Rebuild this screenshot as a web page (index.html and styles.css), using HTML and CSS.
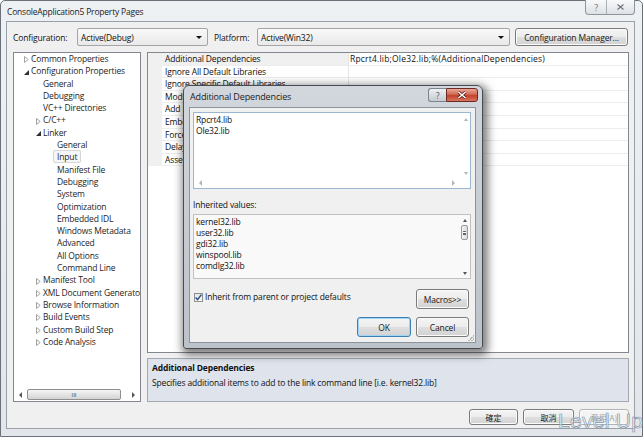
FILE: index.html
```html
<!DOCTYPE html>
<html lang="en">
<head>
    <meta charset="UTF-8">
    <meta name="viewport" content="width=device-width, initial-scale=1.0">
    <title>ConsoleApplication5 Property Pages</title>
    <link rel="stylesheet" href="styles.css">
</head>
<body>

<div class="window">
    <div class="titlebar">
        <span class="title">ConsoleApplication5 Property Pages</span>
        <div class="caption">
            <span class="cap-help">?</span>
            <span class="cap-close">
                <svg width="7" height="6" viewBox="0 0 7 6"><path d="M0.5 0.5 L6.5 5.5 M6.5 0.5 L0.5 5.5" stroke="#6d7279" stroke-width="1.1" fill="none"/></svg>
            </span>
        </div>
    </div>

    <div class="client">
        <div class="config-row">
            <span class="lbl lbl-config">Configuration:</span>
            <div class="combo combo-config">Active(Debug)<span class="arrow"></span></div>
            <span class="lbl lbl-platform">Platform:</span>
            <div class="combo combo-platform">Active(Win32)<span class="arrow"></span></div>
            <div class="btn btn-manager">Configuration Manager...</div>
        </div>

        <div class="main">
            <!-- 左側のツリー -->
            <div class="tree">
                <ul class="tree-list">
                    <li class="lvl0"><span class="exp"><svg width="5" height="7" viewBox="0 0 5 7"><path d="M0.5 0.5 L4.2 3.5 L0.5 6.5 Z" fill="none" stroke="#a2a2a2"/></svg></span>Common Properties</li>
                    <li class="lvl0"><span class="exp"><svg width="5" height="5" viewBox="0 0 5 5"><path d="M5 0 L5 5 L0 5 Z" fill="#2f2f2f"/></svg></span>Configuration Properties</li>
                    <li class="lvl1"><span class="exp"></span>General</li>
                    <li class="lvl1"><span class="exp"></span>Debugging</li>
                    <li class="lvl1"><span class="exp"></span>VC++ Directories</li>
                    <li class="lvl1"><span class="exp"><svg width="5" height="7" viewBox="0 0 5 7"><path d="M0.5 0.5 L4.2 3.5 L0.5 6.5 Z" fill="none" stroke="#a2a2a2"/></svg></span>C/C++</li>
                    <li class="lvl1"><span class="exp"><svg width="5" height="5" viewBox="0 0 5 5"><path d="M5 0 L5 5 L0 5 Z" fill="#2f2f2f"/></svg></span>Linker</li>
                    <li class="lvl2"><span class="exp"></span>General</li>
                    <li class="lvl2"><span class="exp"></span><span class="sel">Input</span></li>
                    <li class="lvl2"><span class="exp"></span>Manifest File</li>
                    <li class="lvl2"><span class="exp"></span>Debugging</li>
                    <li class="lvl2"><span class="exp"></span>System</li>
                    <li class="lvl2"><span class="exp"></span>Optimization</li>
                    <li class="lvl2"><span class="exp"></span>Embedded IDL</li>
                    <li class="lvl2"><span class="exp"></span>Windows Metadata</li>
                    <li class="lvl2"><span class="exp"></span>Advanced</li>
                    <li class="lvl2"><span class="exp"></span>All Options</li>
                    <li class="lvl2"><span class="exp"></span>Command Line</li>
                    <li class="lvl1"><span class="exp"><svg width="5" height="7" viewBox="0 0 5 7"><path d="M0.5 0.5 L4.2 3.5 L0.5 6.5 Z" fill="none" stroke="#a2a2a2"/></svg></span>Manifest Tool</li>
                    <li class="lvl1"><span class="exp"><svg width="5" height="7" viewBox="0 0 5 7"><path d="M0.5 0.5 L4.2 3.5 L0.5 6.5 Z" fill="none" stroke="#a2a2a2"/></svg></span>XML Document Generator</li>
                    <li class="lvl1"><span class="exp"><svg width="5" height="7" viewBox="0 0 5 7"><path d="M0.5 0.5 L4.2 3.5 L0.5 6.5 Z" fill="none" stroke="#a2a2a2"/></svg></span>Browse Information</li>
                    <li class="lvl1"><span class="exp"><svg width="5" height="7" viewBox="0 0 5 7"><path d="M0.5 0.5 L4.2 3.5 L0.5 6.5 Z" fill="none" stroke="#a2a2a2"/></svg></span>Build Events</li>
                    <li class="lvl1"><span class="exp"><svg width="5" height="7" viewBox="0 0 5 7"><path d="M0.5 0.5 L4.2 3.5 L0.5 6.5 Z" fill="none" stroke="#a2a2a2"/></svg></span>Custom Build Step</li>
                    <li class="lvl1"><span class="exp"><svg width="5" height="7" viewBox="0 0 5 7"><path d="M0.5 0.5 L4.2 3.5 L0.5 6.5 Z" fill="none" stroke="#a2a2a2"/></svg></span>Code Analysis</li>
                </ul>
                <div class="hscroll">
                    <span class="sb-btn"><span class="tri-left"></span></span>
                    <span class="sb-thumb"><span class="grip">III</span></span>
                    <span class="sb-track"></span>
                    <span class="sb-btn"><span class="tri-right"></span></span>
                </div>
            </div>

            <!-- 右側のプロパティ -->
            <div class="right">
                <div class="grid">
                    <div class="row selected"><span class="gut"></span><span class="name">Additional Dependencies</span><span class="value">Rpcrt4.lib;Ole32.lib;%(AdditionalDependencies)</span></div>
                    <div class="row"><span class="gut"></span><span class="name">Ignore All Default Libraries</span><span class="value"></span></div>
                    <div class="row"><span class="gut"></span><span class="name">Ignore Specific Default Libraries</span><span class="value"></span></div>
                    <div class="row"><span class="gut"></span><span class="name">Module Definition File</span><span class="value"></span></div>
                    <div class="row"><span class="gut"></span><span class="name">Add Module to Assembly</span><span class="value"></span></div>
                    <div class="row"><span class="gut"></span><span class="name">Embed Managed Resource File</span><span class="value"></span></div>
                    <div class="row"><span class="gut"></span><span class="name">Force Symbol References</span><span class="value"></span></div>
                    <div class="row"><span class="gut"></span><span class="name">Delay Loaded Dlls</span><span class="value"></span></div>
                    <div class="row"><span class="gut"></span><span class="name">Assembly Link Resource</span><span class="value"></span></div>
                </div>
                <div class="desc">
                    <div class="desc-title">Additional Dependencies</div>
                    <div class="desc-text">Specifies additional items to add to the link command line [i.e. kernel32.lib]</div>
                </div>
            </div>
        </div>

        <div class="buttons">
            <div class="btn btn-ok">確定</div>
            <div class="btn btn-cancel">取消</div>
            <div class="btn btn-apply disabled">套用(A)</div>
        </div>
    </div>
</div>

<!-- Additional Dependencies ダイアログ -->
<div class="dialog">
    <div class="dlg-titlebar">
        <span class="dlg-title">Additional Dependencies</span>
        <div class="dlg-caption">
            <span class="dlg-help">?</span>
            <span class="dlg-close">
                <svg width="10" height="8" viewBox="0 0 10 8"><path d="M1.5 1 L8.5 7 M8.5 1 L1.5 7" stroke="#5a1a12" stroke-width="3" fill="none"/><path d="M1.5 1 L8.5 7 M8.5 1 L1.5 7" stroke="#fff" stroke-width="1.6" fill="none"/></svg>
            </span>
        </div>
    </div>
    <div class="dlg-client">
        <div class="editbox">
            <div class="edit-body">
                <div class="edit-lines">
                    <div>Rpcrt4.lib</div>
                    <div>Ole32.lib</div>
                </div>
                <div class="vscroll">
                    <span class="tri-up light"></span>
                    <span class="tri-down light"></span>
                </div>
            </div>
            <div class="edit-hscroll">
                <span class="tri-left light"></span>
                <span class="tri-right light"></span>
                <span class="corner"></span>
            </div>
        </div>

        <div class="inh-label">Inherited values:</div>
        <div class="listbox">
            <div class="list-lines">
                <div>kernel32.lib</div>
                <div>user32.lib</div>
                <div>gdi32.lib</div>
                <div>winspool.lib</div>
                <div>comdlg32.lib</div>
            </div>
            <div class="vscroll list-scroll">
                <span class="tri-up"></span>
                <span class="v-thumb"><span class="v-grip"></span></span>
                <span class="tri-down"></span>
            </div>
        </div>

        <div class="check-row">
            <label class="check">
                <span class="box"><svg width="9" height="9" viewBox="0 0 9 9"><path d="M1.6 4.4 L3.6 6.6 L7.4 1.6" stroke="#2b4f8e" stroke-width="1.5" fill="none"/></svg></span>
                Inherit from parent or project defaults
            </label>
            <div class="btn btn-macros">Macros&gt;&gt;</div>
        </div>

        <div class="dlg-buttons">
            <div class="btn btn-dlg-ok">OK</div>
            <div class="btn btn-dlg-cancel">Cancel</div>
        </div>
        <span class="grip-corner"></span>
    </div>
</div>

<div class="watermark">Level Up</div>

</body>
</html>
```

FILE: styles.css
```css
body {
    margin: 0;
    width: 644px;
    height: 439px;
    overflow: hidden;
    position: relative;
    background: #fff;
    font-family: "Open Sans", "Noto Sans", sans-serif;
    font-size: 8.5px;
    letter-spacing: -0.15px;
    color: #111;
}

/* メインウィンドウ */
.window {
    width: 643px;
    height: 437px;
    box-sizing: border-box;
    border: 1px solid #6b7178;
    border-radius: 5px 5px 0 0;
    background: linear-gradient(#eef1f4, #e2e6ea);
    padding: 0 7px 7px 5px;
    display: flex;
    flex-direction: column;
}
.titlebar {
    height: 20px;
    display: flex;
    align-items: center;
}
.title {
    padding-left: 1px;
    font-size: 8.5px;
    letter-spacing: -0.2px;
    color: #1b1b1b;
}
.caption {
    margin-left: auto;
    align-self: flex-start;
    margin-top: -1px;
    height: 14px;
    display: flex;
    border: 1px solid #8e959d;
    border-top: none;
    border-radius: 0 0 4px 4px;
    background: linear-gradient(#f8f9fa, #dde1e5);
}
.caption span {
    display: flex;
    align-items: center;
    justify-content: center;
}
.cap-help {
    width: 20px;
    border-right: 1px solid #a9afb6;
    color: #6d7279;
    font-size: 9px;
}
.cap-close {
    width: 27px;
}

.client {
    height: 408px;
    box-sizing: border-box;
    border: 1px solid #98a0a9;
    background: #f0f0f0;
    padding: 6px 5px 0 6px;
    display: flex;
    flex-direction: column;
}

/* 構成の行 */
.config-row {
    display: flex;
    align-items: center;
    height: 18px;
}
.lbl-config {
    width: 64px;
}
.lbl-platform {
    width: 43px;
    margin-left: 6px;
}
.combo {
    height: 18px;
    box-sizing: border-box;
    border: 1px solid #a5a5a5;
    border-radius: 2px;
    background: linear-gradient(#f9f9f9, #e9e9e9);
    display: flex;
    align-items: center;
    padding-left: 3px;
}
.combo-config {
    width: 131px;
}
.combo-platform {
    width: 253px;
}
.combo .arrow {
    margin-left: auto;
    margin-right: 5px;
    border-top: 3px solid #111;
    border-left: 3px solid transparent;
    border-right: 3px solid transparent;
}
.btn {
    box-sizing: border-box;
    border: 1px solid #7a7a7a;
    border-radius: 3px;
    background: linear-gradient(#f4f4f4 0%, #ececec 50%, #dfdfdf 51%, #d2d2d2 100%);
    box-shadow: inset 0 0 0 1px #fbfbfb;
    display: flex;
    align-items: center;
    justify-content: center;
    color: #1a1a1a;
}
.btn-manager {
    width: 113px;
    height: 18px;
    margin-left: 5px;
}

.main {
    display: flex;
    gap: 6px;
    height: 350px;
    margin-top: 6px;
}

/* ツリー */
.tree {
    width: 128px;
    box-sizing: border-box;
    border: 1px solid #828790;
    background: #fff;
    display: flex;
    flex-direction: column;
    overflow: hidden;
}
.tree-list {
    list-style: none;
    margin: 0;
    padding: 0;
    flex: 1;
}
.tree-list li {
    height: 12.3px;
    line-height: 12.3px;
    white-space: nowrap;
    color: #1e1e1e;
}
.tree-list .lvl0 { padding-left: 10px; }
.tree-list .lvl1 { padding-left: 22px; }
.tree-list .lvl2 { padding-left: 36px; }
.exp {
    display: inline-block;
    width: 7px;
    vertical-align: middle;
    line-height: 0;
}
.sel {
    margin-left: -4px;
    padding: 0 3px;
    border: 1px solid #d6d6d6;
    border-radius: 2px;
    background: #f6f6f6;
}
.hscroll {
    height: 11px;
    display: flex;
    align-items: stretch;
    margin: 0 0 1px;
}
.sb-btn {
    width: 13px;
    display: flex;
    align-items: center;
    justify-content: center;
}
.sb-thumb {
    width: 94px;
    box-sizing: border-box;
    border: 1px solid #8f8f8f;
    border-radius: 2px;
    background: linear-gradient(#f6f6f6, #d4d4d4);
    display: flex;
    align-items: center;
    justify-content: center;
}
.grip {
    font-size: 6px;
    letter-spacing: 0;
    color: #555;
    font-family: "Liberation Sans", sans-serif;
}
.sb-track {
    flex: 1;
}
.tri-left, .tri-right, .tri-up, .tri-down {
    display: inline-block;
    width: 0;
    height: 0;
}
.tri-left {
    border-right: 3px solid #555;
    border-top: 3px solid transparent;
    border-bottom: 3px solid transparent;
}
.tri-right {
    border-left: 3px solid #555;
    border-top: 3px solid transparent;
    border-bottom: 3px solid transparent;
}
.tri-up {
    border-bottom: 3px solid #555;
    border-left: 2.5px solid transparent;
    border-right: 2.5px solid transparent;
}
.tri-down {
    border-top: 3px solid #555;
    border-left: 2.5px solid transparent;
    border-right: 2.5px solid transparent;
}
.tri-left.light { border-right-color: #b5b5b5; }
.tri-right.light { border-left-color: #b5b5b5; }
.tri-up.light { border-bottom-color: #b5b5b5; }
.tri-down.light { border-top-color: #b5b5b5; }

/* プロパティグリッド */
.right {
    width: 482px;
    display: flex;
    flex-direction: column;
    gap: 5px;
}
.grid {
    height: 301px;
    box-sizing: border-box;
    border: 1px solid #828790;
    background: #fff;
}
.row {
    display: flex;
    height: 12.6px;
    line-height: 12px;
    white-space: nowrap;
}
.row .gut {
    width: 14px;
    background: #f0f0f0;
}
.row .name {
    width: 187px;
    padding-left: 3px;
    box-sizing: border-box;
    border-right: 1px solid #e6e6e6;
    border-bottom: 1px solid #ededed;
    overflow: hidden;
}
.row .value {
    flex: 1;
    padding-left: 1px;
    letter-spacing: 0.2px;
    border-bottom: 1px solid #ededed;
}
.row.selected .name {
    background: #f0f0f0;
}
.desc {
    height: 44px;
    box-sizing: border-box;
    border: 1px solid #a2a9b2;
    background: #dfe4ec;
    padding: 2px 4px;
}
.desc-title {
    font-weight: bold;
    line-height: 13px;
}
.desc-text {
    line-height: 13px;
    margin-top: 1.5px;
}

.buttons {
    display: flex;
    justify-content: flex-end;
    gap: 5px;
    margin-top: 7px;
}
.buttons .btn {
    height: 16px;
    font-family: "Noto Sans CJK TC", sans-serif;
    font-size: 8px;
    letter-spacing: 0;
}
.btn-ok { width: 49px; }
.btn-cancel { width: 51px; }
.btn-apply { width: 50px; }
.btn.disabled {
    color: #a3a3a3;
    border-color: #b0b4b8;
    background: #f4f4f4;
}

/* ダイアログ */
.dialog {
    position: absolute;
    left: 183px;
    top: 85px;
    width: 300px;
    height: 264px;
    box-sizing: border-box;
    border: 1px solid #474c52;
    border-radius: 6px 6px 3px 3px;
    background: linear-gradient(#d2d7dd, #bcc2c9);
    box-shadow: 2px 3px 9px 3px rgba(0, 0, 0, 0.5);
    padding: 0 6px 5px 5px;
    display: flex;
    flex-direction: column;
}
.dlg-titlebar {
    height: 21px;
    display: flex;
    align-items: center;
}
.dlg-title {
    padding-left: 1px;
    font-size: 9px;
    color: #1c1c1c;
}
.dlg-caption {
    margin-left: auto;
    margin-right: -2px;
    align-self: flex-start;
    margin-top: 2px;
    height: 14px;
    display: flex;
}
.dlg-caption span {
    display: flex;
    align-items: center;
    justify-content: center;
    box-sizing: border-box;
}
.dlg-help {
    width: 18px;
    border: 1px solid #7d848c;
    border-right: none;
    border-radius: 3px 0 0 3px;
    background: linear-gradient(#eef1f4, #c5cbd2);
    color: #555b62;
    font-size: 9px;
}
.dlg-close {
    width: 32px;
    border: 1px solid #6c2a20;
    border-radius: 0 3px 3px 0;
    background: linear-gradient(#e9a697 0%, #d26a55 45%, #c3412b 55%, #d9745e 100%);
}
.dlg-client {
    flex: 1;
    box-sizing: border-box;
    border: 1px solid #8c939b;
    background: #f0f0f0;
    padding: 4px 4px 0 3px;
    display: flex;
    flex-direction: column;
    position: relative;
}
.editbox {
    height: 77px;
    box-sizing: border-box;
    border: 1px solid #9bb6d1;
    background: #fff;
    display: flex;
    flex-direction: column;
}
.edit-body {
    flex: 1;
    display: flex;
}
.edit-lines {
    flex: 1;
    padding: 1px 2px;
    line-height: 11px;
}
.vscroll {
    width: 9px;
    display: flex;
    flex-direction: column;
    align-items: center;
    justify-content: space-between;
    padding: 5px 0 3px;
}
.edit-hscroll {
    height: 10px;
    display: flex;
    align-items: center;
    padding-left: 5px;
}
.edit-hscroll .tri-right {
    margin-left: auto;
    margin-right: 6px;
}
.edit-hscroll .corner {
    width: 9px;
    height: 10px;
}
.inh-label {
    margin-top: 10px;
    line-height: 12px;
}
.listbox {
    height: 65px;
    margin-top: 3px;
    box-sizing: border-box;
    border: 1px solid #c0c0c0;
    background: #f9f9f9;
    display: flex;
}
.list-lines {
    flex: 1;
    padding: 0 2px;
    line-height: 11px;
    margin-top: 0.5px;
}
.list-scroll {
    width: 9px;
    margin-right: 1px;
    padding: 4px 0 3px;
    justify-content: flex-start;
}
.list-scroll .tri-down {
    margin-top: auto;
}
.v-thumb {
    width: 7px;
    height: 15px;
    margin-top: 3px;
    box-sizing: border-box;
    border: 1px solid #9a9a9a;
    border-radius: 2px;
    background: linear-gradient(90deg, #f4f4f4, #dcdcdc);
    display: flex;
    align-items: center;
    justify-content: center;
}
.v-grip {
    width: 3px;
    height: 4px;
    border-top: 1px solid #666;
    border-bottom: 1px solid #666;
    box-sizing: border-box;
    background: linear-gradient(#fff 0 1px, #666 1px 2px, transparent 2px);
}
.check-row {
    display: flex;
    align-items: flex-start;
    margin-top: 10px;
    padding-right: 2px;
}
.check {
    display: flex;
    align-items: center;
    margin-top: 3px;
    margin-left: 1px;
    line-height: 10px;
}
.check .box {
    width: 9px;
    height: 9px;
    box-sizing: border-box;
    border: 1px solid #8e8f8f;
    background: linear-gradient(#e4e4e4, #fafafa);
    margin-right: 2px;
    display: flex;
    align-items: center;
    justify-content: center;
}
.check .box svg {
    flex: none;
}
.btn-macros {
    margin-left: auto;
    width: 53px;
    height: 20px;
}
.dlg-buttons {
    display: flex;
    justify-content: flex-end;
    gap: 5px;
    margin-top: 8px;
    padding-right: 2px;
}
.dlg-buttons .btn {
    height: 20px;
}
.btn-dlg-ok {
    width: 54px;
    border-color: #3c7fb1;
    box-shadow: inset 0 0 0 1px #9fd4f4;
}
.btn-dlg-cancel {
    width: 53px;
}
.grip-corner {
    position: absolute;
    right: 1px;
    bottom: 1px;
    width: 6px;
    height: 6px;
    background: linear-gradient(135deg, transparent 50%, #b4b4b4 50%, #b4b4b4 60%, transparent 60%, transparent 75%, #b4b4b4 75%, #b4b4b4 85%, transparent 85%);
}

/* 透かし文字 */
.watermark {
    position: absolute;
    left: 558px;
    top: 409px;
    font-family: "Liberation Sans", sans-serif;
    font-size: 21px;
    letter-spacing: 0.3px;
    color: rgba(255, 255, 255, 0.55);
    -webkit-text-stroke: 0.7px #8396ad;
}
```
